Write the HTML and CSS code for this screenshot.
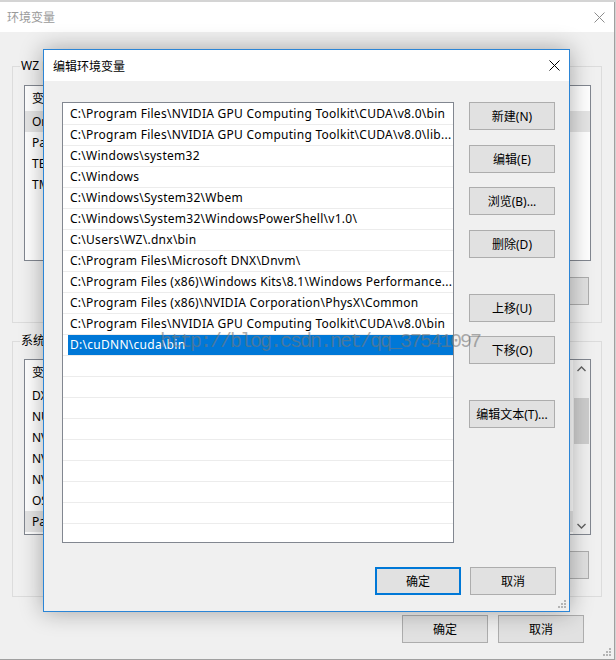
FILE: index.html
```html
<!DOCTYPE html>
<html lang="zh-CN">
<head>
<meta charset="utf-8">
<title>编辑环境变量</title>
<link rel="stylesheet" href="styles.css">
</head>
<body>
<div class="window">
  <div class="titlebar">
    <span class="win-title">环境变量</span>
    <svg class="x-icon inactive" width="11" height="11" viewBox="0 0 11 11"><path d="M0.5 0.5 L10.5 10.5 M10.5 0.5 L0.5 10.5" stroke="currentColor" stroke-width="1" fill="none"/></svg>
  </div>
  <div class="win-body">
    <div class="group">
      <div class="group-label">WZ 的用户变量(U)</div>
      <div class="lv">
        <div class="lv-content">
          <div class="lv-head">变量</div>
          <div class="lv-row hl">OneDrive</div>
          <div class="lv-row">Path</div>
          <div class="lv-row">TEMP</div>
          <div class="lv-row">TMP</div>
        </div>
      </div>
      <div class="btn-row">
        <div class="btn">新建(N)...</div>
        <div class="btn">编辑(E)...</div>
        <div class="btn">删除(D)</div>
      </div>
    </div>
    <div class="group group-sys">
      <div class="group-label">系统变量(S)</div>
      <div class="lv">
        <div class="lv-content">
          <div class="lv-head">变量</div>
          <div class="lv-row">DXSDK_DIR</div>
          <div class="lv-row">NUMBER_OF_PROCESSORS</div>
          <div class="lv-row">NVCUDASAMPLES_ROOT</div>
          <div class="lv-row">NVCUDASAMPLES8_0_ROOT</div>
          <div class="lv-row">NVTOOLSEXT_PATH</div>
          <div class="lv-row">OS</div>
          <div class="lv-row hl">Path</div>
        </div>
        <div class="scrollbar">
          <div class="sb-arrow"><svg width="9" height="6" viewBox="0 0 9 6"><path d="M0.5 5 L4.5 1 L8.5 5" stroke="#606060" stroke-width="1.4" fill="none"/></svg></div>
          <div class="sb-track"><div class="sb-thumb"></div></div>
          <div class="sb-arrow"><svg width="9" height="6" viewBox="0 0 9 6"><path d="M0.5 1 L4.5 5 L8.5 1" stroke="#606060" stroke-width="1.4" fill="none"/></svg></div>
        </div>
      </div>
      <div class="btn-row">
        <div class="btn">新建(W)...</div>
        <div class="btn">编辑(I)...</div>
        <div class="btn">删除(L)</div>
      </div>
    </div>
    <div class="win-foot">
      <div class="btn">确定</div>
      <div class="btn">取消</div>
    </div>
  </div>
  <svg class="grip" width="8" height="8" viewBox="0 0 8 8"><g fill="#b4b4b4"><rect x="6" y="0" width="2" height="2"/><rect x="3" y="3" width="2" height="2"/><rect x="6" y="3" width="2" height="2"/><rect x="0" y="6" width="2" height="2"/><rect x="3" y="6" width="2" height="2"/><rect x="6" y="6" width="2" height="2"/></g></svg>
</div>

<div class="dialog">
  <div class="dlg-title">
    <span>编辑环境变量</span>
    <svg class="x-icon" width="11" height="11" viewBox="0 0 11 11"><path d="M0.5 0.5 L10.5 10.5 M10.5 0.5 L0.5 10.5" stroke="#000" stroke-width="1" fill="none"/></svg>
  </div>
  <div class="dlg-body">
    <div class="dlg-main">
      <div class="pathlist">
        <div class="prow"><div class="pcell">C:\Program Files\NVIDIA GPU Computing Toolkit\CUDA\v8.0\bin</div></div>
        <div class="prow"><div class="pcell">C:\Program Files\NVIDIA GPU Computing Toolkit\CUDA\v8.0\lib...</div></div>
        <div class="prow"><div class="pcell">C:\Windows\system32</div></div>
        <div class="prow"><div class="pcell">C:\Windows</div></div>
        <div class="prow"><div class="pcell">C:\Windows\System32\Wbem</div></div>
        <div class="prow"><div class="pcell">C:\Windows\System32\WindowsPowerShell\v1.0\</div></div>
        <div class="prow"><div class="pcell">C:\Users\WZ\.dnx\bin</div></div>
        <div class="prow"><div class="pcell">C:\Program Files\Microsoft DNX\Dnvm\</div></div>
        <div class="prow"><div class="pcell">C:\Program Files (x86)\Windows Kits\8.1\Windows Performance...</div></div>
        <div class="prow"><div class="pcell">C:\Program Files (x86)\NVIDIA Corporation\PhysX\Common</div></div>
        <div class="prow"><div class="pcell">C:\Program Files\NVIDIA GPU Computing Toolkit\CUDA\v8.0\bin</div></div>
        <div class="prow sel"><div class="pcell">D:\cuDNN\cuda\bin</div></div>
        <div class="prow"><div class="pcell"></div></div>
        <div class="prow"><div class="pcell"></div></div>
        <div class="prow"><div class="pcell"></div></div>
        <div class="prow"><div class="pcell"></div></div>
        <div class="prow"><div class="pcell"></div></div>
        <div class="prow"><div class="pcell"></div></div>
        <div class="prow"><div class="pcell"></div></div>
        <div class="prow"><div class="pcell"></div></div>
        <div class="prow"><div class="pcell"></div></div>
      </div>
      <div class="btncol">
        <div class="btn">新建(N)</div>
        <div class="btn">编辑(E)</div>
        <div class="btn">浏览(B)...</div>
        <div class="btn">删除(D)</div>
        <div class="btn sep">上移(U)</div>
        <div class="btn">下移(O)</div>
        <div class="btn sep">编辑文本(T)...</div>
      </div>
    </div>
    <div class="dlg-foot">
      <div class="btn default">确定</div>
      <div class="btn">取消</div>
    </div>
  </div>
  <svg class="grip" width="8" height="8" viewBox="0 0 8 8"><g fill="#b4b4b4"><rect x="6" y="0" width="2" height="2"/><rect x="3" y="3" width="2" height="2"/><rect x="6" y="3" width="2" height="2"/><rect x="0" y="6" width="2" height="2"/><rect x="3" y="6" width="2" height="2"/><rect x="6" y="6" width="2" height="2"/></g></svg>
</div>

<div class="watermark">http://blog.csdn.net/qq_37541097</div>
</body>
</html>
```
FILE: styles.css
```css
* { box-sizing: border-box; }

body {
  margin: 0;
  width: 616px;
  height: 660px;
  overflow: hidden;
  position: relative;
  background: #d4d4d4;
  font-family: "Noto Sans", "Noto Sans CJK SC", sans-serif;
  font-size: 12px;
  color: #000;
}

/* background window */
.window {
  position: relative;
  margin-top: 2px;
  width: 615px;
  height: 658px;
  background: #f0f0f0;
  border-right: 1px solid #a0a0a0;
  border-bottom: 1px solid #a0a0a0;
  display: flex;
  flex-direction: column;
}

.titlebar {
  height: 30px;
  flex: none;
  background: #fff;
  display: flex;
  align-items: center;
  justify-content: space-between;
  padding: 0 9px 0 7px;
}

.win-title { color: #9a9a9a; }

.x-icon { display: block; }
.x-icon.inactive { color: #8c8c8c; }

.win-body {
  flex: 1;
  display: flex;
  flex-direction: column;
  padding: 34px 12px 0 12px;
}

.group {
  position: relative;
  border: 1px solid #dcdcdc;
  padding: 18px 10px 17px 11px;
}

.group-sys { margin-top: 18px; padding-top: 17px; }

.group-label {
  position: absolute;
  top: -9px;
  left: 7px;
  padding: 0 1px;
  background: #f0f0f0;
  line-height: 16px;
}

.lv {
  height: 176px;
  border: 1px solid #828790;
  background: #fff;
  display: flex;
}

.lv-content { flex: 1; }

.lv-head {
  height: 25px;
  line-height: 25px;
  padding-left: 7px;
}

.lv-row {
  height: 21px;
  line-height: 21px;
  padding-left: 7px;
  white-space: nowrap;
}

.lv-row.hl { background: #e5e5e5; }

.scrollbar {
  width: 17px;
  background: #f0f0f0;
  display: flex;
  flex-direction: column;
}

.sb-arrow {
  height: 17px;
  display: flex;
  align-items: center;
  justify-content: center;
}

.sb-track { flex: 1; padding-top: 21px; }

.sb-thumb {
  margin: 0 1px;
  height: 46px;
  background: #cdcdcd;
}

.btn-row {
  margin-top: 16px;
  display: flex;
  justify-content: flex-end;
  gap: 10px;
  padding-right: 2px;
}

.win-foot {
  margin-top: 18px;
  display: flex;
  justify-content: flex-end;
  gap: 10px;
  padding-right: 18px;
}

.btn {
  width: 86px;
  height: 28px;
  flex: none;
  background: #e1e1e1;
  border: 1px solid #adadad;
  display: flex;
  align-items: center;
  justify-content: center;
  white-space: nowrap;
}

.btn.default { border: 2px solid #0078d7; }

.grip {
  position: absolute;
  right: 3px;
  bottom: 3px;
}

/* dialog */
.dialog {
  position: absolute;
  left: 43px;
  top: 49px;
  width: 527px;
  height: 563px;
  border: 1px solid #2b85d6;
  background: #f0f0f0;
  box-shadow: 0 0 22px rgba(0, 0, 0, 0.32);
  display: flex;
  flex-direction: column;
}

.dlg-title {
  height: 31px;
  flex: none;
  background: #fff;
  display: flex;
  align-items: center;
  justify-content: space-between;
  padding: 0 9px 0 9px;
}

.dlg-body {
  flex: 1;
  display: flex;
  flex-direction: column;
  padding: 21px 13px 16px 18px;
}

.dlg-main {
  display: flex;
  gap: 15px;
}

.pathlist {
  width: 392px;
  height: 441px;
  border: 1px solid #828790;
  background: #fff;
  padding-top: 1px;
  overflow: hidden;
}

.prow {
  height: 21px;
  border-bottom: 1px solid #ececec;
  flex: none;
}

.pcell {
  margin-left: 5px;
  height: 20px;
  line-height: 20px;
  padding-left: 2px;
  white-space: nowrap;
  overflow: hidden;
  letter-spacing: 0.27px;
}

.prow.sel .pcell {
  background: #0078d7;
  color: #fff;
}

.btncol {
  display: flex;
  flex-direction: column;
  gap: 14.5px;
}

.btncol .sep { margin-top: 21.5px; }

.dlg-foot {
  margin-top: auto;
  display: flex;
  justify-content: flex-end;
  gap: 9px;
}

.watermark {
  position: absolute;
  left: 160px;
  top: 330px;
  font-family: "Liberation Mono", monospace;
  font-size: 20px;
  letter-spacing: -2px;
  line-height: 24px;
  color: rgba(120, 120, 120, 0.6);
  white-space: nowrap;
}
```
